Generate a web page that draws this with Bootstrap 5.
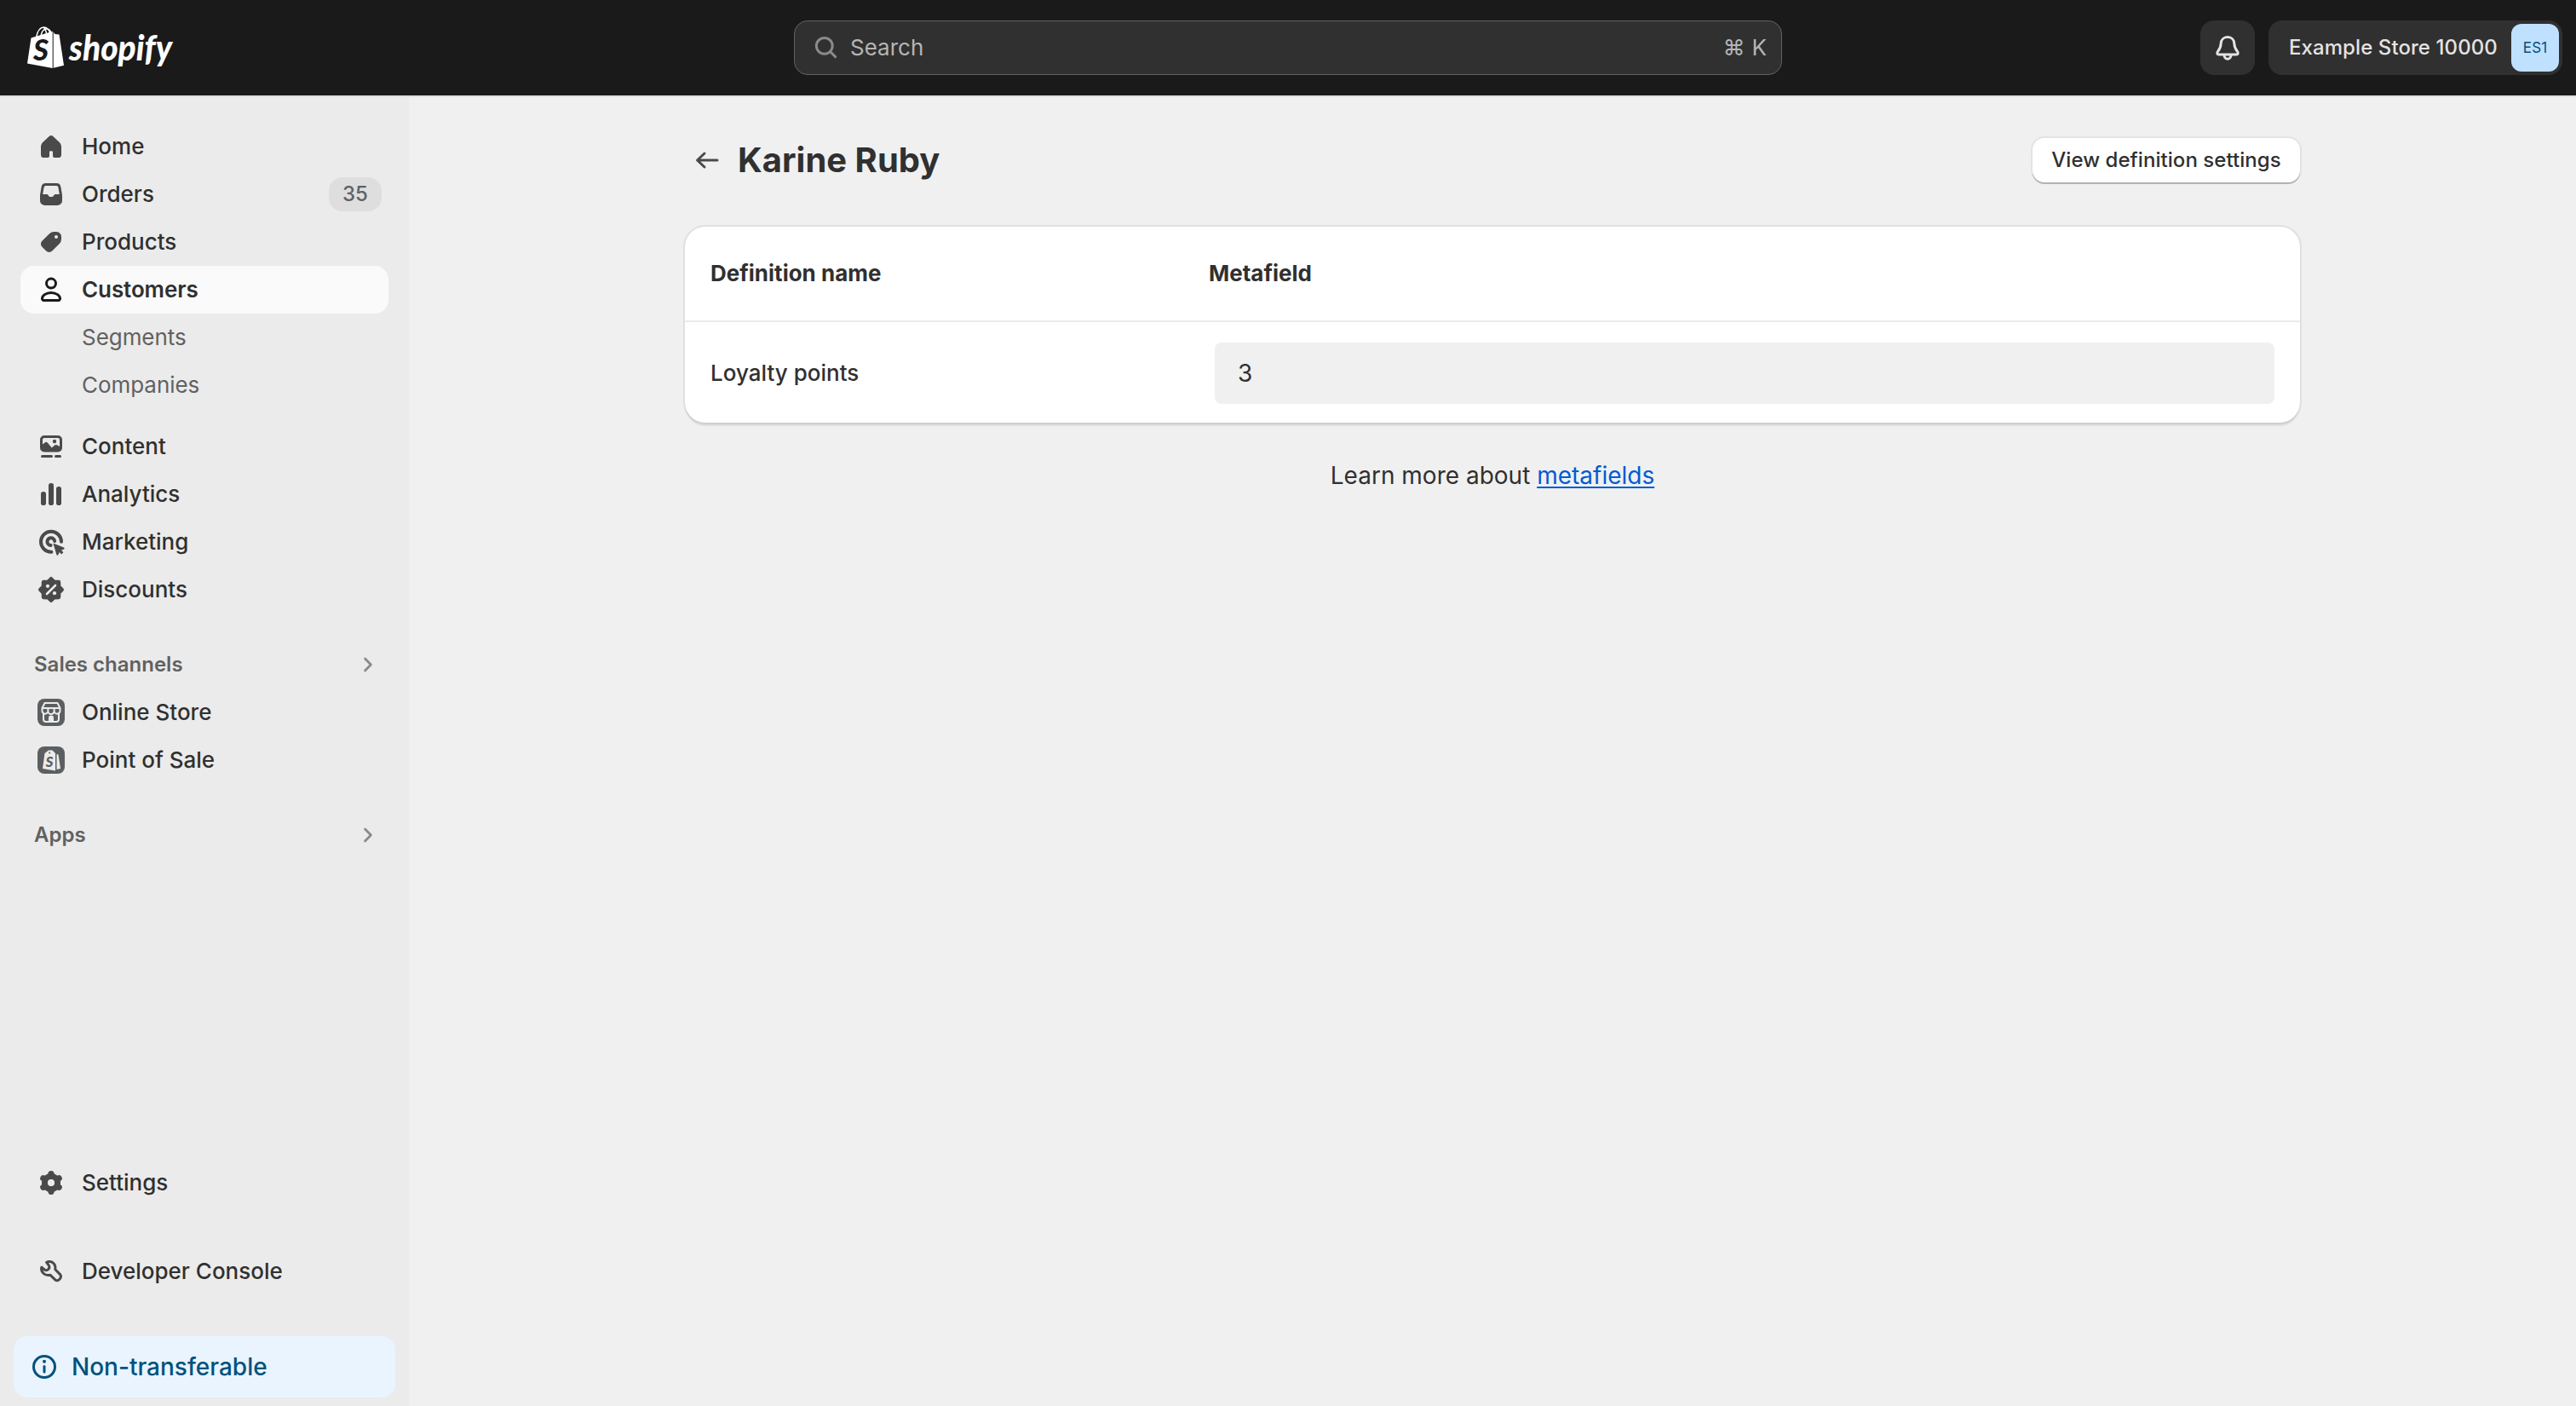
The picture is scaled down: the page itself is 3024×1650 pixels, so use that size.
<!DOCTYPE html>
<html lang="en">
<head>
<meta charset="utf-8">
<meta name="viewport" content="width=device-width, initial-scale=1">
<title>Karine Ruby · Metafields</title>
<link href="https://cdn.jsdelivr.net/npm/bootstrap@5.3.0/dist/css/bootstrap.min.css" rel="stylesheet">
<style>
  body { font-family: Inter, "Liberation Sans", sans-serif; font-size: 26px; line-height: 40px; color: #303030; background: #f0f0f0; font-weight: 450; }
  svg { display: block; flex: none; }
  .topbar { height: 112px; background: #1a1a1a; padding: 0 16px; flex: none; }
  .side-slot { flex: 1 1 0; }
  .brand { margin-left: 16px; }
  .search-box { width: 1160px; height: 64px; border: 1px solid #616161; border-radius: 16px; background: #303030; color: #b5b5b5; padding: 0 17px; font-weight: 400; }
  .kbd-hint { gap: 8px; }
  .bell-btn { width: 64px; height: 64px; border-radius: 16px; background: #303030; }
  .store-btn { height: 64px; width: 345px; border-radius: 16px; background: #303030; color: #e3e3e3; font-size: 24px; font-weight: 500; padding: 0 4px 0 24px; letter-spacing: .08px; }
  .store-avatar { width: 56px; height: 56px; border-radius: 12px; background: #bfe0ff; color: #00527c; font-size: 17px; font-weight: 400; }
  .frame { height: 100vh; }
  .below { border-top: 2px solid rgba(0,0,0,.07); min-height: 0; }
  .side { width: 480px; background: #ebebeb; flex: none; padding: 30px 24px 10px; }
  .side .nav-link { height: 56px; padding: 0 8px 0 16px; border-radius: 16px; color: #303030; font-weight: 530; gap: 16px; line-height: 56px; }
  .side .nav-link svg { fill: #4a4a4a; color: #4a4a4a; }
  .side .nav-link.active { background: #fafafa; font-weight: 620; letter-spacing: -.1px; }
  .side .nav-link.active svg { color: #1a1a1a; }
  .side .nav-link.sub-link { padding-left: 72px; color: #616161; font-weight: 400; letter-spacing: -.05px; }
  .side .nav-link.section-link { margin-top: 32px; padding: 0 4px 0 16px; color: #616161; font-size: 24px; font-weight: 600; }
  .count-pill { width: 62px; height: 40px; line-height: 40px; border-radius: 16px; background: #dedede; color: #616161; font-size: 24px; text-align: center; font-weight: 500; }
  .notice { height: 72px; border-radius: 16px; margin: 0 -8px; background: #eaf4ff; color: #00527c; font-size: 28px; font-weight: 480; padding: 0 16px; gap: 12px; }
  .page { width: 1896px; padding-top: 46px; }
  .page h1 { font-size: 40px; line-height: 56px; font-weight: 690; margin: 0; }
  .back-icon { margin: 0 16px 0 6px; color: #4a4a4a; }
  .btn.settings-btn { height: 52px; width: 314px; padding: 0; border: 0; border-radius: 14px; background: #fff; color: #303030; font-size: 24px; font-weight: 500; letter-spacing: .05px; box-shadow: 0 2px 0 #b3b3b3, 0 0 0 2px #e3e3e3; white-space: nowrap; line-height: 50px; }
  .card.meta-card { border: 0; border-radius: 24px; box-shadow: 0 2px 0 #cfcfcf, 0 0 0 2px #e0e0e0, 0 4px 0 #dedede; margin-top: 50px; height: 230px; }
  .grid-row { padding: 0 30px; }
  .grid-head { height: 110px; font-weight: 690; padding-bottom: 1px; }
  .grid-body { height: 120px; border-top: 2px solid #ebebeb; padding-top: 2px; }
  .name-col { width: 585px; flex: none; }
  .value-box { height: 72px; border-radius: 8px; background: #f0f0f0; font-size: 28px; margin-left: 7px; padding-left: 27px; line-height: 72px; font-weight: 400; }
  .learn { font-size: 28px; margin-top: 42px; font-weight: 400; }
  .learn a { color: #005bd3; text-decoration-thickness: 2px; text-underline-offset: 3px; }
  .s15 { fill: none; stroke: currentColor; stroke-width: 1.5; stroke-linecap: round; stroke-linejoin: round; }
  .side .nav-link svg .s15 { fill: none; }
</style>
</head>
<body>
<div class="frame d-flex flex-column">
  <header class="topbar d-flex align-items-center">
    <div class="side-slot">
      <svg class="brand" width="190" height="56" viewBox="0 0 190 56" fill="#fff">
        <path d="M4.500 16.500 L29.700 8.700 V52 L0 46.500Z"/>
        <path d="M30.700 9.500 L32.500 12 L37.500 12.500 L43 48.700 L30.700 51.800Z"/>
        <path d="M10.500 16 C12 8 15.500 4 19.500 4 C23 4 26 7 26.500 11 M16 14 C17 9 19.500 6 22.500 6 C25.500 6 27.500 8 28 11 M22.500 13 C22.500 9.500 21.500 6.500 19.500 4.500" fill="none" stroke="#fff" stroke-width="1.500"/>
        <text x="7" y="42.500" font-family="Lato, sans-serif" font-size="35" font-weight="900" font-style="italic" fill="#1a1a1a" textLength="18" lengthAdjust="spacingAndGlyphs">S</text>
        <text x="49" y="43" font-family="Lato, sans-serif" font-size="41" font-weight="900" font-style="italic" textLength="121" lengthAdjust="spacingAndGlyphs">shopify</text>
      </svg>
    </div>
    <div class="search-box d-flex align-items-center">
      <svg width="40" height="40" viewBox="0 0 20 20" style="color:#8a8a8a"><g class="s15"><circle cx="8.900" cy="8.900" r="4.700"/><path d="M12.400 12.400 L15.300 15.300"/></g></svg>
      <span class="ms-2">Search</span>
      <span class="kbd-hint d-flex ms-auto"><span>⌘</span><span>K</span></span>
    </div>
    <div class="side-slot d-flex justify-content-end gap-3">
      <div class="bell-btn d-flex align-items-center justify-content-center">
        <svg width="40" height="40" viewBox="0 0 20 20" style="color:#e3e3e3"><g class="s15"><path d="M10 3.800 C7.600 3.800 6.200 5.400 6.100 7.500 C6 9.800 5.600 10.600 4.400 12 C3.500 13.100 3.800 14 5 14 H15 C16.200 14 16.500 13.100 15.600 12 C14.400 10.600 14 9.800 13.900 7.500 C13.800 5.400 12.400 3.800 10 3.800Z"/><path d="M8 14.200 C8 17.400 12 17.400 12 14.200"/></g></svg>
      </div>
      <div class="store-btn d-flex align-items-center justify-content-between">
        <span class="text-nowrap">Example Store 10000</span>
        <span class="store-avatar d-flex align-items-center justify-content-center">ES1</span>
      </div>
    </div>
  </header>

  <div class="below d-flex flex-grow-1">
    <nav class="side d-flex flex-column">
      <div class="nav flex-column flex-nowrap">
        <a class="nav-link d-flex align-items-center" href="#"><svg width="40" height="40" viewBox="0 0 20 20"><path d="M8.700 4.100 a1.900 1.900 0 0 1 2.600 0 L15 7.600 A3.200 3.200 0 0 1 16 9.900 V14.700 A1.800 1.800 0 0 1 14.200 16.500 H12.300 A1.300 1.300 0 0 1 11 15.200 V13.300 A.7 .7 0 0 0 10.300 12.600 H9.700 A.7 .7 0 0 0 9 13.300 V15.200 A1.300 1.300 0 0 1 7.700 16.500 H5.800 A1.800 1.800 0 0 1 4 14.700 V9.900 A3.200 3.200 0 0 1 5 7.600Z"/></svg>Home</a>
        <a class="nav-link d-flex align-items-center" href="#"><svg width="40" height="40" viewBox="0 0 20 20"><path fill-rule="evenodd" d="M6.900 3.500 H13.100 A2.600 2.600 0 0 1 15.700 5.700 L16.500 10.500 V13.700 A2.800 2.800 0 0 1 13.700 16.500 H6.300 A2.800 2.800 0 0 1 3.500 13.700 V10.500 L4.300 5.700 A2.600 2.600 0 0 1 6.900 3.500Z M6.900 5 A1.100 1.100 0 0 0 5.800 5.900 L5.100 10 H7.600 C8.500 10 8.400 11.500 9.400 11.500 H10.600 C11.600 11.500 11.500 10 12.400 10 H14.900 L14.200 5.900 A1.100 1.100 0 0 0 13.100 5Z"/></svg>Orders<span class="count-pill ms-auto">35</span></a>
        <a class="nav-link d-flex align-items-center" href="#"><svg width="40" height="40" viewBox="0 0 20 20"><path fill-rule="evenodd" d="M11.800 4 H13.200 A2.800 2.800 0 0 1 16 6.800 V8.200 A4 4 0 0 1 14.900 11 L10.600 15.300 A2.500 2.500 0 0 1 7.100 15.300 L4.700 12.900 A2.500 2.500 0 0 1 4.700 9.400 L9 5.100 A4 4 0 0 1 11.800 4Z M13 8 A1 1 0 1 0 13 6 A1 1 0 1 0 13 8Z"/></svg>Products</a>
        <a class="nav-link active d-flex align-items-center" href="#"><svg width="40" height="40" viewBox="0 0 20 20"><g class="s15"><circle cx="10" cy="6.300" r="2.750"/><path d="M4.750 15.200 C4.750 13.500 7 11.700 10 11.700 C13 11.700 15.250 13.500 15.250 15.200 A1 1 0 0 1 14.700 16.250 H5.300 A1 1 0 0 1 4.750 15.200Z"/></g></svg>Customers</a>
        <a class="nav-link sub-link" href="#">Segments</a>
        <a class="nav-link sub-link" href="#">Companies</a>
        <a class="nav-link d-flex align-items-center mt-3" href="#"><svg width="40" height="40" viewBox="0 0 20 20"><path fill-rule="evenodd" d="M6 3.500 H14 A2.500 2.500 0 0 1 16.500 6 V10.700 A2.500 2.500 0 0 1 14 13.200 H6 A2.500 2.500 0 0 1 3.500 10.700 V6 A2.500 2.500 0 0 1 6 3.500Z M6 5 A1 1 0 0 0 5 6 V8.800 L6.300 7.700 A1.200 1.200 0 0 1 7.900 7.800 L10.400 10.700 L11.900 9.400 A1.400 1.400 0 0 1 13.700 9.300 L15 10 V6 A1 1 0 0 0 14 5Z"/><circle cx="12" cy="7" r="1.100"/><rect x="4" y="15" width="7" height="1.500" rx=".75"/><rect x="12" y="15" width="4" height="1.500" rx=".75"/></svg>Content</a>
        <a class="nav-link d-flex align-items-center" href="#"><svg width="40" height="40" viewBox="0 0 20 20"><rect x="4" y="8.500" width="3" height="8" rx="1.400"/><rect x="8.500" y="3.500" width="3" height="13" rx="1.400"/><rect x="13" y="5.500" width="3" height="11" rx="1.400"/></svg>Analytics</a>
        <a class="nav-link d-flex align-items-center" href="#"><svg width="40" height="40" viewBox="0 0 20 20"><g class="s15" style="stroke-width:2"><path d="M16 9.900 A6 6 0 1 0 10.200 15.900"/><path d="M12.100 9.500 A2.200 2.200 0 1 0 9.800 12"/></g><path d="M11.200 10.700 L17.500 13.200 C18 13.400 17.900 14 17.500 14.200 L16 14.900 L17.200 16.100 L16.100 17.200 L14.900 16 L14.200 17.500 C14 17.900 13.400 18 13.200 17.500Z"/></svg>Marketing</a>
        <a class="nav-link d-flex align-items-center" href="#"><svg width="40" height="40" viewBox="0 0 20 20"><path stroke="#4a4a4a" stroke-width="2.200" stroke-linejoin="round" d="M10 3.600 L11.800 5.400 L14.500 5.500 L14.600 8.200 L16.400 10 L14.600 11.800 L14.500 14.500 L11.800 14.600 L10 16.400 L8.200 14.600 L5.500 14.500 L5.400 11.800 L3.600 10 L5.400 8.200 L5.500 5.500 L8.200 5.400Z"/><path d="M7.500 12.500 L12.500 7.500" stroke="#ebebeb" stroke-width="1.300" stroke-linecap="round"/><circle cx="8" cy="7.900" r="1.050" fill="#ebebeb"/><circle cx="12" cy="12.100" r="1.050" fill="#ebebeb"/></svg>Discounts</a>
        <a class="nav-link section-link d-flex align-items-center justify-content-between" href="#">Sales channels<svg width="40" height="40" viewBox="0 0 20 20"><path d="M8.300 6.500 L11.700 10 L8.300 13.500" fill="none" stroke="#8a8a8a" stroke-width="1.400" stroke-linecap="round" stroke-linejoin="round"/></svg></a>
        <a class="nav-link d-flex align-items-center" href="#"><svg width="40" height="40" viewBox="0 0 40 40"><rect x="4" y="4" width="32" height="32" rx="8" fill="#5c5f62"/><g fill="none" stroke="#ebebeb" stroke-width="2" stroke-linejoin="round"><path d="M12.500 9 H27.500 L30.500 15 V18 A3.400 3.400 0 0 1 23.600 18.500 A3.600 3.600 0 0 1 16.400 18.500 A3.400 3.400 0 0 1 9.500 18 V15Z M9.800 15 H30.200 M16.400 15.500 V18.500 M23.600 15.500 V18.500"/><path d="M11 21.500 V28 A3 3 0 0 0 14 31 H26 A3 3 0 0 0 29 28 V21.500"/></g><path d="M17 30.500 V26.500 A3 3 0 0 1 23 26.500 V30.500Z" fill="#ebebeb"/></svg>Online Store</a>
        <a class="nav-link d-flex align-items-center" href="#"><svg width="40" height="40" viewBox="0 0 40 40"><rect x="4" y="4" width="32" height="32" rx="8" fill="#5c5f62"/><path d="M12.500 12 L17 8.500 H21.500 L25 12 V32.500 L10 30Z M26.500 13 L28.500 13.500 L31 30 L26.500 31Z" fill="#ebebeb"/><circle cx="18.200" cy="11.500" r="1" fill="#5c5f62"/><text x="13.500" y="27.500" font-family="Lato, sans-serif" font-weight="900" font-style="italic" font-size="17" fill="#5c5f62" textLength="9" lengthAdjust="spacingAndGlyphs">S</text></svg>Point of Sale</a>
        <a class="nav-link section-link d-flex align-items-center justify-content-between" href="#">Apps<svg width="40" height="40" viewBox="0 0 20 20"><path d="M8.300 6.500 L11.700 10 L8.300 13.500" fill="none" stroke="#8a8a8a" stroke-width="1.400" stroke-linecap="round" stroke-linejoin="round"/></svg></a>
      </div>
      <div class="nav flex-column mt-auto">
        <a class="nav-link d-flex align-items-center" href="#"><svg width="40" height="40" viewBox="0 0 20 20"><circle cx="10" cy="10" r="3.700" fill="none" stroke="#4a4a4a" stroke-width="3.600"/><g stroke="#4a4a4a" stroke-width="3.600" stroke-linecap="round"><path d="M10 5.700 V4.850 M10 14.300 V15.150 M13.700 7.850 L14.600 7.350 M13.700 12.150 L14.600 12.650 M6.300 7.850 L5.400 7.350 M6.300 12.150 L5.400 12.650"/></g><circle cx="10" cy="10" r="2" fill="#ebebeb"/></svg>Settings</a>
        <a class="nav-link d-flex align-items-center mt-5 mb-5" href="#"><svg width="40" height="40" viewBox="0 0 20 20"><path class="s15" d="M8 4.400 C10.400 3.700 13 5.600 12.400 8.900 L15.300 11.800 C16.800 13.300 14.200 16.600 12.400 14.900 L9.400 12.100 C6.200 12.900 3.700 10.200 4.400 7.600 L6.400 9.200 C7.800 9.800 9.600 8.200 8.700 6.600 L7.300 4.700Z"/></svg>Developer Console</a>
        <div class="notice d-flex align-items-center"><svg width="40" height="40" viewBox="0 0 20 20"><g class="s15"><circle cx="10" cy="10" r="6.250"/><path d="M10 9.800 V13"/></g><circle cx="10" cy="6.900" r="1" fill="currentColor"/></svg><span>Non-transferable</span></div>
      </div>
    </nav>

    <main class="flex-grow-1 d-flex justify-content-center">
      <div class="page">
        <div class="d-flex align-items-center justify-content-between">
          <div class="d-flex align-items-center">
            <svg class="back-icon" width="40" height="40" viewBox="0 0 20 20"><path class="s15" d="M16 10 H4.300 M8.500 6 L4.300 10 L8.500 14"/></svg>
            <h1>Karine Ruby</h1>
          </div>
          <button class="btn settings-btn" type="button">View definition settings</button>
        </div>
        <div class="card meta-card">
          <div class="grid-row grid-head d-flex align-items-center">
            <div class="name-col">Definition name</div>
            <div>Metafield</div>
          </div>
          <div class="grid-row grid-body d-flex align-items-center">
            <div class="name-col">Loyalty points</div>
            <div class="value-box flex-grow-1">3</div>
          </div>
        </div>
        <p class="learn text-center">Learn more about <a href="#">metafields</a></p>
      </div>
    </main>
  </div>
</div>
<script src="https://cdn.jsdelivr.net/npm/bootstrap@5.3.0/dist/js/bootstrap.bundle.min.js"></script>
</body>
</html>
